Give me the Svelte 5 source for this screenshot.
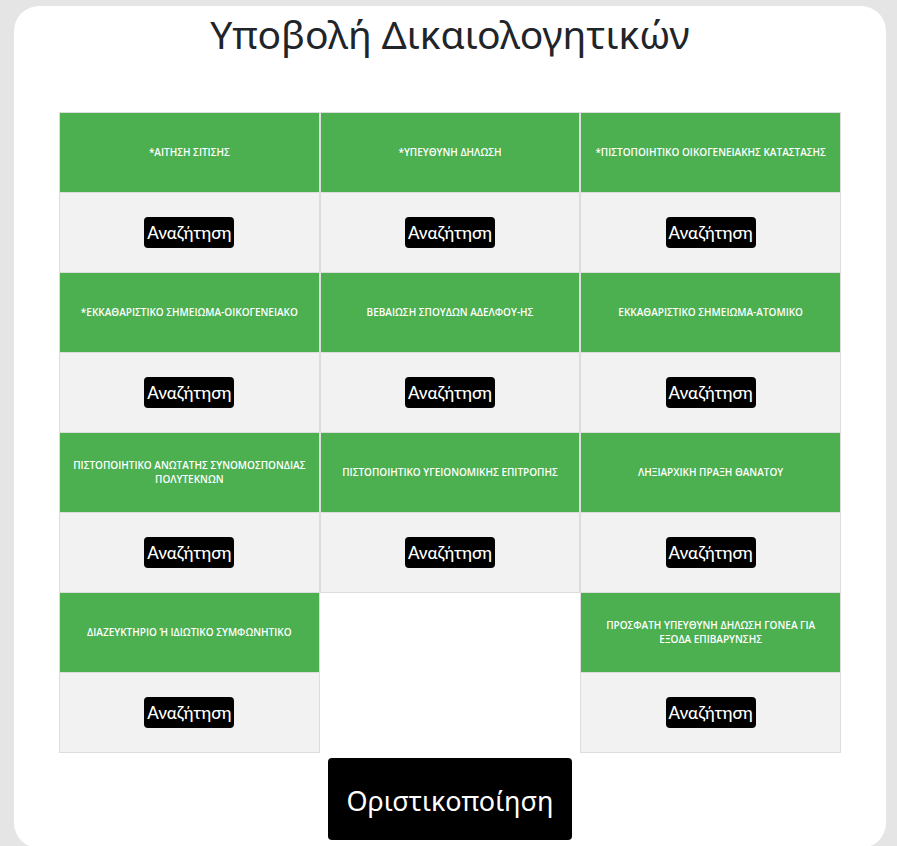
<script>
  const columns = [
    [
      { id: 'sitisi', title: '*ΑΙΤΗΣΗ ΣΙΤΙΣΗΣ' },
      { id: 'ekkatharistiko-oik', title: '*ΕΚΚΑΘΑΡΙΣΤΙΚΟ ΣΗΜΕΙΩΜΑ-ΟΙΚΟΓΕΝΕΙΑΚΟ' },
      { id: 'polyteknon', title: 'ΠΙΣΤΟΠΟΙΗΤΙΚΟ ΑΝΩΤΑΤΗΣ ΣΥΝΟΜΟΣΠΟΝΔΙΑΣ ΠΟΛΥΤΕΚΝΩΝ' },
      { id: 'diazefktirio', title: 'ΔΙΑΖΕΥΚΤΗΡΙΟ Ή ΙΔΙΩΤΙΚΟ ΣΥΜΦΩΝΗΤΙΚΟ' }
    ],
    [
      { id: 'ypefthyni', title: '*ΥΠΕΥΘΥΝΗ ΔΗΛΩΣΗ' },
      { id: 'spoudon', title: 'ΒΕΒΑΙΩΣΗ ΣΠΟΥΔΩΝ ΑΔΕΛΦΟΥ-ΗΣ' },
      { id: 'ygeionomiki', title: 'ΠΙΣΤΟΠΟΙΗΤΙΚΟ ΥΓΕΙΟΝΟΜΙΚΗΣ ΕΠΙΤΡΟΠΗΣ' }
    ],
    [
      { id: 'oikogeneiaki', title: '*ΠΙΣΤΟΠΟΙΗΤΙΚΟ ΟΙΚΟΓΕΝΕΙΑΚΗΣ ΚΑΤΑΣΤΑΣΗΣ' },
      { id: 'ekkatharistiko-atomiko', title: 'ΕΚΚΑΘΑΡΙΣΤΙΚΟ ΣΗΜΕΙΩΜΑ-ΑΤΟΜΙΚΟ' },
      { id: 'lixiarxiki', title: 'ΛΗΞΙΑΡΧΙΚΗ ΠΡΑΞΗ ΘΑΝΑΤΟΥ' },
      { id: 'prosfati', title: 'ΠΡΟΣΦΑΤΗ ΥΠΕΥΘΥΝΗ ΔΗΛΩΣΗ ΓΟΝΕΑ ΓΙΑ ΕΞΟΔΑ ΕΠΙΒΑΡΥΝΣΗΣ' }
    ]
  ];
</script>

<main class="card">
  <h1>Υποβολή Δικαιολογητικών</h1>

  <form onsubmit={(e) => e.preventDefault()}>
    <div class="columns">
      {#each columns as documents}
        <table>
          <tbody>
            {#each documents as doc (doc.id)}
              <tr><th id={doc.id}>{doc.title}</th></tr>
              <tr>
                <td><button type="button" class="browse" aria-describedby={doc.id}>Αναζήτηση</button></td>
              </tr>
            {/each}
          </tbody>
        </table>
      {/each}
    </div>

    <div class="actions">
      <button type="submit" class="submit">Οριστικοποίηση</button>
    </div>
  </form>
</main>

<style>
  :global(body) {
    background: #e5e5e5;
  }

  .card {
    box-sizing: border-box;
    margin: 6px 11px 0 14px;
    padding: 4px 45px 8px;
    border-radius: 25px;
    background: #fff;
    font-family: 'Noto Sans', sans-serif;
  }

  h1 {
    margin: 0 0 54px;
    color: #212529;
    font-size: 39px;
    font-weight: 400;
    line-height: 48px;
    text-align: center;
  }

  .columns {
    display: grid;
    grid-template-columns: repeat(3, minmax(0, 1fr));
    align-items: start;
  }

  table {
    width: 100%;
    table-layout: fixed;
    border-collapse: collapse;
    text-align: center;
  }

  th,
  td {
    box-sizing: border-box;
    height: 80px;
    padding: 8px;
    border: 1px solid #ddd;
    vertical-align: middle;
  }

  th {
    padding-bottom: 10px;
    background: #4caf50;
    color: #fff;
    font-family: 'Open Sans', 'Noto Sans', sans-serif;
    font-size: 10px;
    font-weight: 600;
    line-height: 14px;
  }

  td {
    background: #f2f2f2;
  }

  button {
    border: 0;
    border-radius: 4px;
    background: #000;
    color: #fff;
    font-family: inherit;
    cursor: pointer;
  }

  .browse {
    display: block;
    margin: 0 auto;
    padding: 2px 3px;
    font-family: Lato, 'Noto Sans', sans-serif;
    font-size: 17px;
    font-weight: 500;
    line-height: 27px;
  }

  .actions {
    display: flex;
    justify-content: center;
    margin-top: 5px;
  }

  .submit {
    padding: 22px 18px 18px;
    font-size: 27px;
    font-weight: 400;
    line-height: 42px;
  }
</style>
